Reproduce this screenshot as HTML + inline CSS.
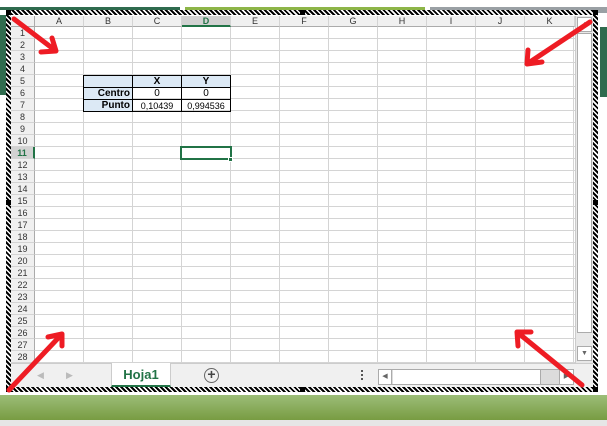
<!DOCTYPE html>
<html><head><style>
*{margin:0;padding:0;box-sizing:border-box}
body{width:607px;height:426px;overflow:hidden;background:#fff;font-family:"Liberation Sans",sans-serif;position:relative}
.a{position:absolute}
.hatch{background:repeating-linear-gradient(45deg,#000 0 2px,#fff 2px 3.5px)}
.ch{position:absolute;top:16px;height:11px;border-right:1px solid #d4d4d4;background:#f0f0f0;font-size:9px;color:#333;text-align:center;line-height:11px;border-bottom:1px solid #ababab}
.rh{position:absolute;left:11px;width:24px;height:12px;background:#f0f0f0;border-bottom:1px solid #d4d4d4;border-right:1px solid #ababab;font-size:9px;color:#333;text-align:center;line-height:12px}
td{border:1px solid #000;font-size:10px;height:12px;padding:0 2px;line-height:10px;color:#000}
</style></head><body>
<div class="a" style="left:0;top:7px;width:180px;height:3px;background:#2f6b4e"></div>
<div class="a" style="left:185px;top:7px;width:240px;height:3px;background:#8db548"></div>
<div class="a" style="left:430px;top:7px;width:177px;height:6px;background:#9aa0a4"></div>
<div class="a" style="left:0;top:15px;width:6px;height:80px;background:#2f6b4e"></div>
<div class="a" style="left:600px;top:27px;width:7px;height:70px;background:#2f6b4e"></div>
<div class="a" style="left:0;top:395px;width:607px;height:25px;background:linear-gradient(#9cbd78,#789c42)"></div>
<div class="a" style="left:0;top:420px;width:607px;height:6px;background:#e6e6e6"></div>
<div class="a hatch" style="left:6px;top:10px;width:592px;height:5px"></div>
<div class="a hatch" style="left:6px;top:387px;width:592px;height:5px"></div>
<div class="a hatch" style="left:6px;top:10px;width:5px;height:382px"></div>
<div class="a hatch" style="left:593px;top:10px;width:5px;height:382px"></div>
<div class="a" style="left:6px;top:10px;width:5px;height:5px;background:#000"></div>
<div class="a" style="left:593px;top:10px;width:5px;height:5px;background:#000"></div>
<div class="a" style="left:6px;top:387px;width:5px;height:5px;background:#000"></div>
<div class="a" style="left:593px;top:387px;width:5px;height:5px;background:#000"></div>
<div class="a" style="left:6px;top:200px;width:5px;height:5px;background:#000"></div>
<div class="a" style="left:593px;top:200px;width:5px;height:5px;background:#000"></div>
<div class="a" style="left:300px;top:387px;width:5px;height:5px;background:#000"></div>
<div class="a" style="left:300px;top:10px;width:5px;height:5px;background:#000"></div>
<div class="a" style="left:35px;top:27px;width:540px;height:336px;background:
repeating-linear-gradient(90deg,transparent 0 48px,#d4d4d4 48px 49px),
repeating-linear-gradient(180deg,transparent 0 11px,#d4d4d4 11px 12px),#fff"></div>
<div class="a" style="left:11px;top:16px;width:24px;height:11px;background:#f0f0f0;border-right:1px solid #ababab;border-bottom:1px solid #ababab"></div>
<div class="ch" style="left:35px;width:49px">A</div>
<div class="ch" style="left:84px;width:49px">B</div>
<div class="ch" style="left:133px;width:49px">C</div>
<div class="ch" style="left:182px;width:49px;background:#d2d2d2;color:#217346;font-weight:bold;border-bottom:2px solid #217346">D</div>
<div class="ch" style="left:231px;width:49px">E</div>
<div class="ch" style="left:280px;width:49px">F</div>
<div class="ch" style="left:329px;width:49px">G</div>
<div class="ch" style="left:378px;width:49px">H</div>
<div class="ch" style="left:427px;width:49px">I</div>
<div class="ch" style="left:476px;width:49px">J</div>
<div class="ch" style="left:525px;width:50px">K</div>
<div id="rows"></div>
<script>
var h='';for(var i=1;i<=28;i++){var s=i==11?'background:#d2d2d2;color:#217346;font-weight:bold;border-right:2px solid #217346;':'';h+='<div class="rh" style="top:'+(27+(i-1)*12)+'px;'+s+'">'+i+'</div>';}
document.getElementById('rows').innerHTML=h;
</script>
<table class="a" style="left:83px;top:75px;border-collapse:collapse;width:148px">
<tr><td style="width:49px;background:#dce9f5"></td><td style="width:49px;background:#dce9f5;text-align:center;font-weight:bold">X</td><td style="background:#dce9f5;text-align:center;font-weight:bold">Y</td></tr>
<tr><td style="background:#dce9f5;text-align:right;font-weight:bold">Centro</td><td style="text-align:center">0</td><td style="text-align:center">0</td></tr>
<tr><td style="background:#dce9f5;text-align:right;font-weight:bold">Punto</td><td style="text-align:center;font-size:9px">0,10439</td><td style="text-align:center;font-size:9px">0,994536</td></tr>
</table>
<div class="a" style="left:180px;top:146px;width:52px;height:14px;border:2px solid #217346"></div>
<div class="a" style="left:228px;top:157px;width:5px;height:5px;background:#217346;border:1px solid #fff"></div>
<div class="a" style="left:575px;top:16px;width:18px;height:347px;background:#e8e8e8;border-left:1px solid #ccc"></div>
<div class="a" style="left:577px;top:17px;width:15px;height:15px;background:#fff;border:1px solid #ababab;font-size:7px;color:#666;text-align:center;line-height:13px">▲</div>
<div class="a" style="left:577px;top:33px;width:15px;height:300px;background:#fff;border:1px solid #ababab"></div>
<div class="a" style="left:577px;top:346px;width:15px;height:15px;background:#fff;border:1px solid #ababab;font-size:7px;color:#666;text-align:center;line-height:13px">▼</div>
<div class="a" style="left:11px;top:363px;width:582px;height:24px;background:#f0f0f0;border-top:1px solid #ccc"></div>
<div class="a" style="left:37px;top:370px;font-size:9px;color:#bbb">◀</div>
<div class="a" style="left:66px;top:370px;font-size:9px;color:#bbb">▶</div>
<div class="a" style="left:111px;top:363px;width:60px;height:24px;background:#fff;border-left:1px solid #ccc;border-right:1px solid #ccc;border-bottom:2px solid #217346;font-size:13px;font-weight:bold;color:#217346;text-align:center;line-height:24px">Hoja1</div>
<div class="a" style="left:204px;top:368px;width:15px;height:15px;border:1.5px solid #666;border-radius:50%;font-size:14px;line-height:11px;text-align:center;color:#444;font-weight:bold">+</div>
<div class="a" style="left:361px;top:370px;width:2px;height:2px;background:#555;box-shadow:0 4px #555,0 8px #555"></div>
<div class="a" style="left:378px;top:369px;width:196px;height:16px;background:#dcdcdc;border:1px solid #ababab"></div>
<div class="a" style="left:379px;top:370px;width:13px;height:14px;background:#fff;border-right:1px solid #ababab;font-size:7px;color:#666;text-align:center;line-height:14px">◀</div>
<div class="a" style="left:393px;top:370px;width:148px;height:14px;background:#fff;border-right:1px solid #ababab"></div>
<div class="a" style="left:559px;top:370px;width:14px;height:14px;background:#fff;border-left:1px solid #ababab;font-size:7px;color:#666;text-align:center;line-height:14px">▶</div>
<svg class="a" style="left:0;top:0" width="607" height="426">
<g stroke="#ee1c24" stroke-width="5" fill="none" stroke-linecap="round" stroke-linejoin="round">
<path d="M14 19 L56 51 M41 52 L56 51 L52 38"/>
<path d="M590 22 L527 64 M528 50 L527 64 L542 62"/>
<path d="M9 390 L62 334 M48 337 L62 334 L62 346"/>
<path d="M582 385 L517 332 M518 346 L517 332 L531 332"/>
</g></svg>
</body></html>
